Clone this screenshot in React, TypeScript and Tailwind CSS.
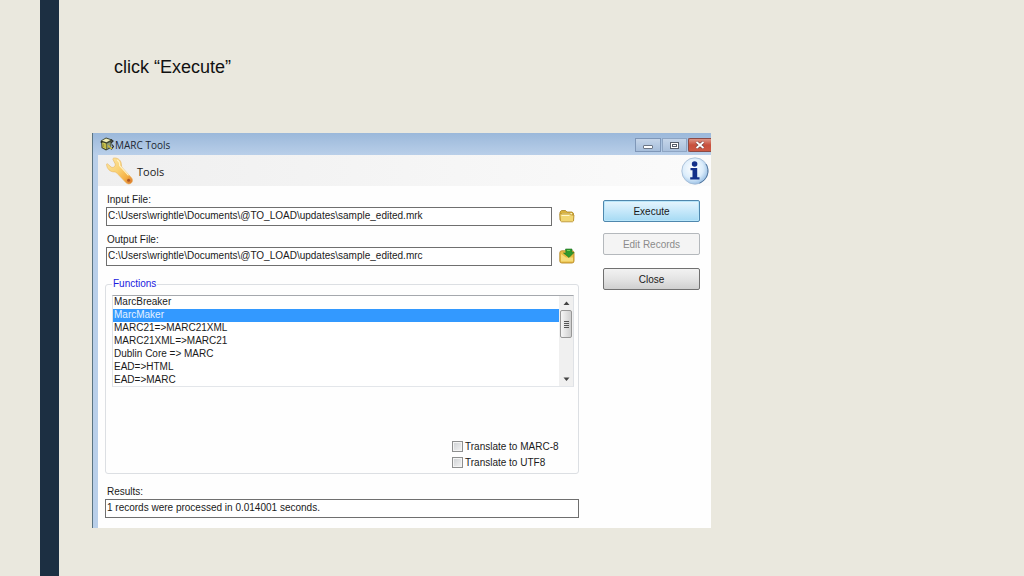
import { ReactNode } from 'react';

const FUNCTIONS = [
  'MarcBreaker',
  'MarcMaker',
  'MARC21=>MARC21XML',
  'MARC21XML=>MARC21',
  'Dublin Core => MARC',
  'EAD=>HTML',
  'EAD=>MARC',
];

const AppIcon = () => (
  <svg className="size-[14px]" viewBox="0 0 14 14" aria-hidden="true">
    <path d="M1 3.500 6 .5l6 2-1 8.500-5 2.500L1.500 11z" fill="#3f4530" />
    <path d="M2 3.800l4-2.300 4.500 1.500L6.500 5.300z" fill="#f1eeb8" />
    <path d="M2.200 5.300 6.300 6.800v5.400L2.600 10.600z" fill="#e3da58" />
    <path d="M3.500 6.500v3.800M5 7v4" stroke="#77752c" strokeWidth=".6" />
    <path d="M7 6.500 10.500 5v5L7 12z" fill="#8c9b77" />
    <path d="M11 2.500l2 1.500-2 2M12 7.500l1.500 2-2.500 3" fill="none" stroke="#2d2f2c" strokeWidth="1.200" />
    <path d="M8 8.500l4 3.500" stroke="#d7bd35" strokeWidth="1.300" />
    <circle cx="1.500" cy="5" r="1" fill="#2c3022" />
  </svg>
);

const WrenchIcon = () => (
  <svg className="h-[28px] w-[27px]" viewBox="0 0 27 28" aria-hidden="true">
    <defs>
      <linearGradient id="wrench" x1="0" y1="0" x2="1" y2="1">
        <stop offset="0" stopColor="#fbe7a5" />
        <stop offset=".45" stopColor="#fad274" />
        <stop offset=".75" stopColor="#f5b044" />
        <stop offset="1" stopColor="#d8702a" />
      </linearGradient>
    </defs>
    <path
      d="M8.500 1c4-.1 7 2.900 6.900 6.900 0 1.300.3 2.200 1.100 3.100l8.800 9.500c1.700 1.800 1.600 4.100 0 5.500-1.600 1.400-4 1.300-5.500-.4l-8.900-9.500c-.9-.9-1.700-1.200-2.900-1.200C4.200 14.900.8 11.800.6 7.400c0-.7.600-.9 1-.5l3.600 3.200c1 .7 2.500.3 3.300-.6.900-1 1-2.300.4-3.200L7 2.600C6.600 1.800 7 1.100 8.500 1z"
      fill="url(#wrench)"
      stroke="#e8b45c"
      strokeWidth=".6"
    />
    <path d="M11 3c2.300 1.300 2.900 3.300 2.600 5.500l8.900 9.800" fill="none" stroke="#fff3c8" strokeWidth="1.100" />
    <circle cx="22.600" cy="23.300" r="1.500" fill="#a95424" />
  </svg>
);

const InfoIcon = () => (
  <svg className="size-[28px]" viewBox="0 0 28 28" role="img" aria-label="Information">
    <defs>
      <radialGradient id="info" cx=".42" cy=".4" r=".65">
        <stop offset="0" stopColor="#ffffff" />
        <stop offset=".6" stopColor="#dcedfb" />
        <stop offset="1" stopColor="#8fb9e2" />
      </radialGradient>
    </defs>
    <circle cx="14" cy="14" r="13.200" fill="url(#info)" stroke="#9fb8d2" strokeWidth=".8" />
    <path d="M25 7a13 13 0 0 1-6.500 19" fill="none" stroke="#56799f" strokeWidth="1" />
    <circle cx="13.600" cy="7" r="2.800" fill="#12308a" />
    <path d="M9.500 11h6.700v9.300h2.300v2.200H9.200v-2.200h2.300v-7.100h-2z" fill="#12308a" />
  </svg>
);

const FolderIcon = () => (
  <svg className="h-[14px] w-[16px]" viewBox="0 0 16 14" aria-hidden="true">
    <path d="M1 10.500V3l1.500-1.500h4L8 3h5l1.500 1.300v7.200H2z" fill="#d9b23c" stroke="#a98425" strokeWidth=".8" />
    <path d="M3 4h10v3H3z" fill="#fbf3c4" />
    <path d="M.8 4.800h10.500l1 1.200h2.700l-.5 6-1 .8H2.500l-1-.8z" fill="#f1d671" stroke="#b58c2b" strokeWidth=".8" />
    <path d="M2.500 6.500h8" stroke="#fff6cb" />
  </svg>
);

const SaveFolderIcon = () => (
  <svg className="h-[16px] w-[16px]" viewBox="0 0 16 16" aria-hidden="true">
    <rect x=".8" y="2.800" width="14.200" height="12.200" rx="2" fill="#e8bd43" stroke="#b98b29" strokeWidth=".9" />
    <path d="M2 6 7 9.500h7v4H2z" fill="#f6dc7b" />
    <path d="M6.500 1h6.500v3.500h2L10 9.500 4.500 5h2.500z" fill="#2f9a2c" stroke="#1e7423" strokeWidth=".6" />
    <path d="M8 2.500h3" stroke="#76cf57" />
  </svg>
);

interface FileFieldProps {
  id: string;
  label: string;
  value: string;
  browseLabel: string;
  icon: ReactNode;
}

const FileField = ({ id, label, value, browseLabel, icon }: FileFieldProps) => (
  <div>
    <label htmlFor={id} className="block pl-px leading-[14px]">
      {label}
    </label>
    <div className="flex gap-[7px]">
      <input
        id={id}
        type="text"
        defaultValue={value}
        className="h-[19px] min-w-0 flex-1 border border-[#6f6f6f] bg-white px-px pb-[2px]"
      />
      <button type="button" aria-label={browseLabel} className="flex h-[17px] w-[20px] items-center">
        {icon}
      </button>
    </div>
  </div>
);

const TitleBar = () => (
  <div className="flex h-[22px] items-center bg-linear-to-b from-[#9bb8da] to-[#b9cfe9] pl-[7px] font-['Open_Sans',sans-serif] text-[10px] text-[#1c2733]">
    <AppIcon />
    <h2 className="ml-px flex-1 pt-[2px]">MARC Tools</h2>
    <div className="flex gap-px pt-[2px]">
      <button
        type="button"
        aria-label="Minimize"
        className="flex h-[14px] w-[26px] items-center justify-center border border-[#7f97b8] bg-linear-to-b from-[#c5d5e9] to-[#a6bedb]"
      >
        <span className="mt-[3px] h-[4px] w-[10px] rounded-[1px] border border-[#6b7686] bg-white" />
      </button>
      <button
        type="button"
        aria-label="Maximize"
        className="flex h-[14px] w-[25px] items-center justify-center border border-[#8ea5c3] bg-linear-to-b from-[#c5d5e9] to-[#a9c0dc]"
      >
        <span className="flex h-[7px] w-[9px] items-center justify-center border border-[#535d6b] bg-white">
          <span className="h-[3px] w-[5px] border border-[#535d6b]" />
        </span>
      </button>
      <button
        type="button"
        aria-label="Close window"
        className="flex h-[14px] w-[23px] items-center justify-center rounded-l-[2px] border border-r-0 border-[#8c4a45] bg-linear-to-b from-[#dc9486] via-[#c8503d] to-[#cd5a45]"
      >
        <svg className="h-[8px] w-[10px]" viewBox="0 0 10 8" aria-hidden="true">
          <path d="M1.500 1l7 6M8.500 1l-7 6" stroke="#6a3a3a" strokeWidth="3" />
          <path d="M1.500 1l7 6M8.500 1l-7 6" stroke="#ffffff" strokeWidth="1.900" />
        </svg>
      </button>
    </div>
  </div>
);

const ScrollBar = () => (
  <div className="flex w-[14px] flex-col items-center bg-[#f0f0f0]" aria-hidden="true">
    <svg className="h-[14px] w-[7px]" viewBox="0 0 7 14">
      <path d="M.5 9l3-3.500 3 3.500z" fill="#444" />
    </svg>
    <div className="flex h-[28px] w-[12px] flex-col items-center justify-center gap-px rounded-[2px] border border-[#979797] bg-linear-to-r from-[#f6f6f6] to-[#cfcfcf]">
      <span className="h-px w-[5px] bg-[#555]" />
      <span className="h-px w-[5px] bg-[#555]" />
      <span className="h-px w-[5px] bg-[#555]" />
      <span className="h-px w-[5px] bg-[#555]" />
    </div>
    <svg className="mt-auto h-[14px] w-[7px]" viewBox="0 0 7 14">
      <path d="M.5 5.500h6l-3 3.500z" fill="#444" />
    </svg>
  </div>
);

const FunctionsGroup = () => (
  <fieldset className="mt-[11px] rounded-[3px] border border-[#dcdfe3] pr-[4px] pb-[3px] pl-[6px]">
    <legend className="px-px leading-[14px] text-[#1a1ae0]">Functions</legend>
    <div className="mt-[4px] flex h-[92px] border border-t-[#a5a8ad] border-r-[#dfe2e6] border-b-[#e3e6ea] border-l-[#dfe2e6]">
      <select
        aria-label="Functions"
        size={7}
        defaultValue="MarcMaker"
        className="min-w-0 flex-1 overflow-hidden bg-white outline-none [scrollbar-width:none]"
      >
        {FUNCTIONS.map((name) => (
          <option
            key={name}
            value={name}
            className="h-[13px] min-h-0 px-px py-0 leading-[13px] checked:bg-[linear-gradient(#3399ff,#3399ff)] checked:[-webkit-text-fill-color:#e4f1ff]"
          >
            {name}
          </option>
        ))}
      </select>
      <ScrollBar />
    </div>
    <div className="mt-[51px] ml-auto flex w-[122px] flex-col">
      {['Translate to MARC-8', 'Translate to UTF8'].map((name) => (
        <label key={name} className="flex h-[16px] items-center gap-[2px] whitespace-nowrap">
          <input
            type="checkbox"
            className="size-[11px] shrink-0 appearance-none border border-[#8e8f8f] bg-linear-to-br from-[#cdd0d3] to-[#f4f4f4] shadow-[inset_0_0_0_1px_#f4f4f4]"
          />
          {name}
        </label>
      ))}
    </div>
  </fieldset>
);

const MarcToolsWindow = () => (
  <section className="w-full max-w-[619px] border-l border-[#5a7482] bg-[#fefefe] font-['Liberation_Sans',Arial,sans-serif] text-[10px] text-[#1a1a1a]">
    <TitleBar />
    <div className="border-l-5 border-[#b9cfe9]">
      <header className="flex h-[31px] items-center bg-linear-to-r from-[#efefef] to-[#fbfbfb] pr-[2px] pl-[8px]">
        <WrenchIcon />
        <h3 className="ml-[4px] flex-1 pt-[2px] font-['Open_Sans',sans-serif] text-[11px] leading-[16px]">Tools</h3>
        <InfoIcon />
      </header>
      <div className="flex gap-[24px] pr-[11px] pb-[10px] pl-[7px]">
        <div className="min-w-0 flex-1">
          <div className="flex flex-col gap-[7px] pt-[7px] pl-px">
            <FileField
              id="input-file"
              label="Input File:"
              value="C:\Users\wrightle\Documents\@TO_LOAD\updates\sample_edited.mrk"
              browseLabel="Browse for input file"
              icon={<FolderIcon />}
            />
            <FileField
              id="output-file"
              label="Output File:"
              value="C:\Users\wrightle\Documents\@TO_LOAD\updates\sample_edited.mrc"
              browseLabel="Browse for output file"
              icon={<SaveFolderIcon />}
            />
          </div>
          <FunctionsGroup />
          <label htmlFor="results" className="mt-[11px] block pl-[2px] leading-[14px]">
            Results:
          </label>
          <input
            id="results"
            type="text"
            readOnly
            defaultValue="1 records were processed in 0.014001 seconds."
            className="block h-[19px] w-full border border-[#6f6f6f] bg-white px-px pb-[2px]"
          />
        </div>
        <div className="flex w-[97px] flex-col pt-[14px]">
          <button
            type="button"
            className="h-[22px] rounded-[2px] border border-[#4f87ad] bg-linear-to-b from-[#e6f5fd] via-[#c6e8fa] to-[#a5daf4] shadow-[inset_0_0_0_1px_#b9e6fa]"
          >
            Execute
          </button>
          <button
            type="button"
            disabled
            className="mt-[11px] h-[22px] rounded-[2px] border border-[#b4b8bc] bg-[#f4f4f4] text-[#8b8b8b]"
          >
            Edit Records
          </button>
          <button
            type="button"
            className="mt-[13px] h-[22px] rounded-[2px] border border-[#707070] bg-linear-to-b from-[#f2f2f2] via-[#e4e4e4] to-[#cfcfcf]"
          >
            Close
          </button>
        </div>
      </div>
    </div>
  </section>
);

const App = () => (
  <div className="flex min-h-screen bg-[#eae8de]">
    <div className="ml-10 w-[19px] shrink-0 bg-[#1c2f42]" />
    <main className="min-w-0 flex-1 pt-[53px] pl-[33px]">
      <h1 className="mb-[52px] pl-[22px] font-['Liberation_Sans',Arial,sans-serif] text-[18px] leading-[28px] text-[#111]">
        click “Execute”
      </h1>
      <MarcToolsWindow />
    </main>
  </div>
);

export default App;
